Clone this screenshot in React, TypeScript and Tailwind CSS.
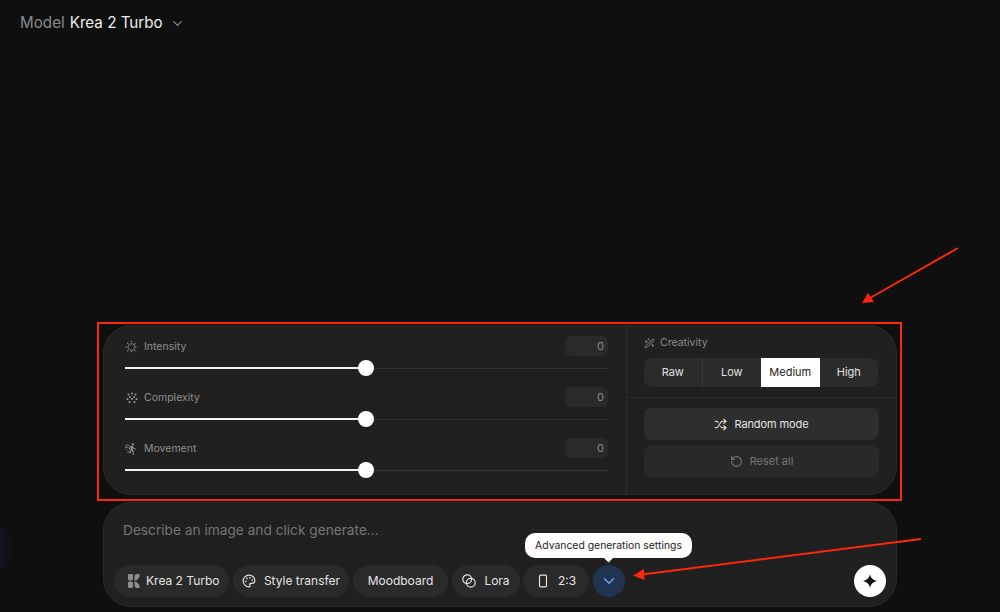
import { ChevronDown, Palette, RectangleVertical, RotateCcw, Shuffle, WandSparkles } from "lucide-react";
import type { ReactNode } from "react";

const font = { fontFamily: "Inter, 'Liberation Sans', sans-serif" };

function IntensityIcon() {
  return (
    <svg width="14" height="14" viewBox="0 0 24 24" fill="none" stroke="currentColor" strokeWidth="2.2" strokeDasharray="2 1.4" aria-hidden>
      <circle cx="12" cy="12" r="6" />
      <path d="M12 1v4M12 19v4M1 12h4M19 12h4M4.200 4.200l2.800 2.800M17 17l2.800 2.800M4.200 19.800 7 17M17 7l2.800-2.800" />
    </svg>
  );
}

function ComplexityIcon() {
  const dots = [[5, 5], [12, 3], [19, 5], [8, 10], [16, 10], [3, 14], [12, 14], [21, 14], [7, 20], [17, 20]];
  return (
    <svg width="12" height="12" viewBox="0 0 24 24" fill="currentColor" aria-hidden>
      {dots.map(([x, y]) => (
        <rect key={`${x}-${y}`} x={x - 1.8} y={y - 1.8} width="3.600" height="3.600" rx="1" />
      ))}
    </svg>
  );
}

function MovementIcon() {
  return (
    <svg width="14" height="14" viewBox="0 0 24 24" fill="currentColor" aria-hidden>
      <path d="M14.490 5.480c1.100 0 2-.9 2-2s-.9-2-2-2-2 .9-2 2 .9 2 2 2zm-3.600 13.900l1-4.400 2.100 2v6h2v-7.500l-2.100-2 .6-3c1.300 1.500 3.300 2.500 5.500 2.500v-2c-1.900 0-3.500-1-4.300-2.400l-1-1.600c-.4-.6-1-1-1.700-1-.3 0-.5.1-.8.1l-5.200 2.200v4.700h2v-3.400l1.800-.7-1.600 8.100-4.900-1-.4 2 7 1.400z" />
      <path d="M1 4h7v1.600H1zM0 8h5v1.600H0zM1 12h3v1.600H1z" />
    </svg>
  );
}

function KreaIcon() {
  return (
    <svg width="12" height="14" viewBox="0 0 12 14" fill="#8f8f8f" aria-hidden>
      <path d="M0 1.500C0 .6.600 0 1.500 0h2C4.400 0 5 .6 5 1.500v3C5 5.800 4.200 6.600 3 6.600H1.500C.6 6.600 0 6 0 5.100z" />
      <path d="M6.600 1.800C7 .7 7.900 0 9 0h1.400c1 0 1.600.8 1.300 1.700-.5 1.600-1.500 3.200-3 4.300-.7.5-1.500.7-2.400.7.4-1.600.2-3.300.3-4.900z" />
      <path d="M0 9c0-.9.600-1.500 1.500-1.500H3c1.200 0 2 .8 2 2v3C5 13.400 4.400 14 3.500 14h-2C.6 14 0 13.400 0 12.500z" />
      <path d="M6.200 7.400c.9 0 1.800.2 2.500.8 1.500 1.100 2.500 2.500 3 4 .3.900-.3 1.800-1.300 1.800H9c-1.100 0-2-.7-2.400-1.800-.2-1.600 0-3.200-.4-4.800z" />
    </svg>
  );
}

function LoraIcon() {
  return (
    <svg width="14" height="14" viewBox="0 0 14 14" fill="none" stroke="currentColor" strokeWidth="1.200" aria-hidden>
      <circle cx="5.200" cy="5.200" r="4.400" />
      <circle cx="8.800" cy="8.800" r="4.400" />
    </svg>
  );
}

function Slider({ icon, label, value }: { icon: ReactNode; label: string; value: number }) {
  return (
    <div>
      <div className="flex h-5 items-center justify-between">
        <div className="flex items-center gap-[6px] pt-px text-[10.5px] text-[#8f8f8f]">
          <span className="flex w-[13px] justify-center">{icon}</span>
          {label}
        </div>
        <div className="flex h-5 w-[43px] items-center justify-end rounded-md bg-[#2a2a2a] pr-[4px] text-[11px] text-[#8a8a8a]">
          {value}
        </div>
      </div>
      <div className="relative mt-1 flex h-4 items-center">
        <div className="h-[1px] w-full bg-[#343434]" />
        <div className="absolute left-0 top-[7px] h-[2px] w-1/2 bg-[#f2f2f2]" />
        <div className="absolute left-[233px] top-0 h-4 w-4 rounded-full bg-white" />
      </div>
    </div>
  );
}

function Chip({ icon, label, className }: { icon?: ReactNode; label: string; className: string }) {
  return (
    <div className={`flex h-8 items-center gap-2 rounded-full bg-[#2a2a2a] text-[12px] text-[#e4e4e4] ${className}`}>
      {icon}
      {label}
    </div>
  );
}

export default function App() {
  return (
    <div className="relative flex h-[612px] w-[1000px] flex-col overflow-hidden bg-[#0f0f0f]" style={font}>
      <div className="absolute -left-[22px] top-[525px] h-[46px] w-[30px] rounded-full bg-[#12161c] blur-[3px]" />

      <div className="flex items-center gap-[5px] px-5 pt-[12px] text-[15.2px] leading-[22px]">
        <span className="text-[#8a8a8a]">Model</span>
        <span className="text-[#eeeeee]">Krea 2 Turbo</span>
        <ChevronDown size={15} className="ml-[2px] text-[#8a8a8a]" />
      </div>

      <div className="mt-auto flex flex-col gap-2 pb-[5px] pl-[103px] pr-[103px]">
        <div className="flex h-[170px] rounded-[28px] border border-[#2a2a2a] bg-[#202020]">
          <div className="flex w-[522px] shrink-0 flex-col gap-[11px] pl-[21px] pr-[18px] pt-[10px]">
            <Slider icon={<IntensityIcon />} label="Intensity" value={0} />
            <Slider icon={<ComplexityIcon />} label="Complexity" value={0} />
            <Slider icon={<MovementIcon />} label="Movement" value={0} />
          </div>

          <div className="flex flex-1 flex-col border-l border-[#2c2c2c]">
            <div className="h-[72px] border-b border-[#2e2e2e] px-[17px] pt-[9px]">
              <div className="flex h-4 items-center gap-[5px] text-[10.5px] text-[#8a8a8a]">
                <WandSparkles size={11} />
                Creativity
              </div>
              <div className="mt-[7px] grid h-[29px] w-[234px] grid-cols-4 overflow-hidden rounded-lg bg-[#2b2b2b] text-[11px] text-[#e0e0e0]">
                <div className="flex items-center justify-center border-r border-[#3a3a3a]">Raw</div>
                <div className="flex items-center justify-center">Low</div>
                <div className="flex items-center justify-center bg-white text-[#222222]">Medium</div>
                <div className="flex items-center justify-center">High</div>
              </div>
            </div>
            <div className="flex flex-col gap-[5px] px-[17px] pt-[10px]">
              <div className="flex h-8 w-[235px] items-center justify-center gap-[7px] rounded-lg bg-[#2e2e2e] text-[11px] tracking-[-0.1px] text-[#e4e4e4]">
                <Shuffle size={13} />
                Random mode
              </div>
              <div className="flex h-8 w-[235px] items-center justify-center gap-[7px] rounded-lg bg-[#292929] text-[11px] text-[#777777]">
                <RotateCcw size={13} />
                Reset all
              </div>
            </div>
          </div>
        </div>

        <div className="relative -mt-[1px] flex h-[105px] flex-col rounded-[28px] border border-[#2a2a2a] bg-[#202020] px-[10px]">
          <div className="pl-[9px] pt-[17px] text-[13.7px] leading-5 text-[#757575]">Describe an image and click generate...</div>
          <div className="mt-auto flex items-center gap-1 pb-[9px]">
            <Chip icon={<KreaIcon />} label="Krea 2 Turbo" className="w-[115px] justify-start pl-[14px] gap-[6px]" />
            <Chip icon={<Palette size={14} />} label="Style transfer" className="w-[116px] justify-center" />
            <Chip label="Moodboard" className="w-[95px] justify-center" />
            <Chip icon={<LoraIcon />} label="Lora" className="w-[68px] justify-center" />
            <Chip icon={<RectangleVertical size={14} />} label="2:3" className="-ml-[1px] w-[66px] justify-center" />
            <div className="relative">
              <div className="flex h-8 w-8 items-center justify-center rounded-full bg-[#203452] text-[#6fa8e8]">
                <ChevronDown size={18} strokeWidth={1.75} />
              </div>
              <div className="absolute bottom-[39px] left-[16px] w-[167px] -translate-x-[84px] rounded-[10px] bg-white py-[5px] text-center text-[10.4px] leading-[15px] text-[#1d1d1d]">
                Advanced generation settings
                <div className="absolute -bottom-[3px] left-[80px] h-[7px] w-[7px] rotate-45 bg-white" />
              </div>
            </div>
            <div className="ml-auto flex h-8 w-8 items-center justify-center rounded-full bg-white">
              <svg width="14" height="14" viewBox="0 0 14 14" fill="#111111" aria-hidden>
                <path d="M7 0c.5 3.800 2.700 6 7 7-4.300 1-6.500 3.200-7 7-.5-3.800-2.700-6-7-7 4.300-1 6.500-3.200 7-7z" />
              </svg>
            </div>
          </div>
        </div>
      </div>

      {/* annotations */}
      <div className="pointer-events-none absolute left-[97px] top-[322px] h-[179px] w-[805px] border-2 border-[#f9290a]" />
      <svg className="pointer-events-none absolute left-0 top-0" width="1000" height="612" aria-hidden>
        <path d="M958 248 870 298" stroke="#f9290a" strokeWidth="2" />
        <path d="M862 303 868 293 874 302z" fill="#f9290a" />
        <path d="M921 539 642 574.500" stroke="#f9290a" strokeWidth="2" />
        <path d="M633 575.500 644 569 644.500 580z" fill="#f9290a" />
      </svg>
    </div>
  );
}
